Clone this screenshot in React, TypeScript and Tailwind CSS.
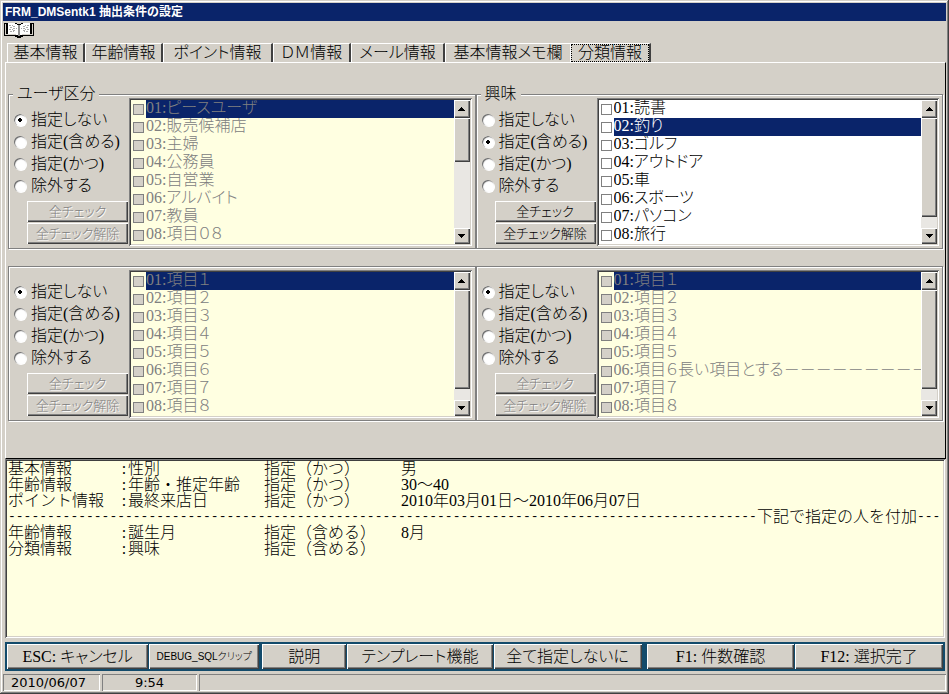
import React from 'react';
import { clsx } from 'clsx';

const raised =
  'bg-[#d4d0c8] shadow-[inset_1px_1px_#fff,inset_-1px_-1px_#404040,inset_-2px_-2px_#808080]';
const sunken =
  'shadow-[inset_1px_1px_#808080,inset_-1px_-1px_#fff,inset_2px_2px_#404040,inset_-2px_-2px_#d4d0c8]';
const mincho =
  "font-['Liberation_Serif','Noto_Sans_CJK_JP',serif] font-light [font-feature-settings:'palt']";

type Group = {
  id: string;
  title?: string;
  mode: number;
  enabled: boolean;
  selected: number;
  thumb: string;
  items: string[];
};

const modes = ['指定しない', '指定(含める)', '指定(かつ)', '除外する'];

const groups: Group[] = [
  {
    id: 'user',
    title: 'ユーザ区分',
    mode: 0,
    enabled: false,
    selected: 0,
    thumb: 'h-11',
    items: ['ピースユーザ', '販売候補店', '主婦', '公務員', '自営業', 'アルバイト', '教員', '項目０８'],
  },
  {
    id: 'hobby',
    title: '興味',
    mode: 1,
    enabled: true,
    selected: 1,
    thumb: 'h-[99px]',
    items: ['読書', '釣り', 'ゴルフ', 'アウトドア', '車', 'スポーツ', 'パソコン', '旅行'],
  },
  {
    id: 'third',
    mode: 0,
    enabled: false,
    selected: 0,
    thumb: 'h-[99px]',
    items: ['項目１', '項目２', '項目３', '項目４', '項目５', '項目６', '項目７', '項目８'],
  },
  {
    id: 'fourth',
    mode: 0,
    enabled: false,
    selected: 0,
    thumb: 'h-[99px]',
    items: ['項目１', '項目２', '項目３', '項目４', '項目５', '項目６長い項目とする－－－－－－－－－', '項目７', '項目８'],
  },
];

const tabs = [
  { label: '基本情報', width: 'w-[78px]' },
  { label: '年齢情報', width: 'w-[78px]' },
  { label: 'ポイント情報', width: 'w-[110px]' },
  { label: 'ＤＭ情報', width: 'w-[78px]' },
  { label: 'メール情報', width: 'w-[94px]' },
  { label: '基本情報メモ欄', width: 'w-[125px]' },
  { label: '分類情報', width: 'w-[81px]' },
];

const summaryTop = [
  ['基本情報', '性別', '指定（かつ）', '男'],
  ['年齢情報', '年齢・推定年齢', '指定（かつ）', '30～40'],
  ['ポイント情報', '最終来店日', '指定（かつ）', '2010年03月01日～2010年06月07日'],
];
const summaryBottom = [
  ['年齢情報', '誕生月', '指定（含める）', '8月'],
  ['分類情報', '興味', '指定（含める）', ''],
];

function BookIcon() {
  return (
    <svg width="30" height="16" viewBox="0 0 30 16" shapeRendering="crispEdges" aria-hidden="true">
      <path d="M0 1h13v1h4v-1h13v13h-11v1h-2v1h-4v-1h-2v-1h-11z" fill="#000" />
      <path d="M1 2h1v10h10v1h-11z M28 2h1v11h-11v-1h10z" fill="#d4d0c8" />
      <path d="M4 1h7v1h2v1h1v10h-2v-1h-8z M26 1h-7v1h-2v1h-1v10h2v-1h8z" fill="#fff" />
      <path
        d="M5 3.5h4M9 4.5h3M6 5.5h3M9 6.5h4M5 7.5h4M9 8.5h3M6 9.5h4M25 3.5h-4M21 4.5h-3M24 5.5h-3M21 6.5h-4M25 7.5h-4M21 8.5h-3M24 9.5h-4"
        fill="none"
        stroke="#a8a8a8"
        strokeDasharray="2 1"
      />
      <path d="M14 3h2v11h-2z" fill="#909090" />
    </svg>
  );
}

function ScrollBar({ thumb }: { thumb: string }) {
  return (
    <div className="flex w-4 shrink-0 flex-col bg-[#e9e7e3]">
      <button type="button" aria-label="上へスクロール" className={clsx('flex h-[18px] items-center justify-center', raised)}>
        <svg width="7" height="4" viewBox="0 0 7 4" shapeRendering="crispEdges">
          <path d="M3 0h1v1h1v1h1v1h1v1H0V3h1V2h1V1h1z" />
        </svg>
      </button>
      <div className={clsx(thumb, raised)} />
      <div className="flex-1" />
      <button type="button" aria-label="下へスクロール" className={clsx('flex h-4 items-center justify-center', raised)}>
        <svg width="7" height="4" viewBox="0 0 7 4" shapeRendering="crispEdges">
          <path d="M0 0h7v1H6v1H5v1H4v1H3V3H2V2H1V1H0z" />
        </svg>
      </button>
    </div>
  );
}

function GroupPanel({ group }: { group: Group }) {
  const { id, title, mode, enabled, selected, thumb, items } = group;
  return (
    <fieldset
      aria-label={title ?? '分類'}
      className="relative flex min-w-0 border border-[#808080] p-[3px] pb-0.5 shadow-[inset_1px_1px_#fff,1px_1px_#fff]"
    >
      {title && (
        <legend className="absolute -top-[11px] left-1 bg-[#d4d0c8] px-1 text-[16px] leading-5">{title}</legend>
      )}
      <div className="flex w-[117px] shrink-0 flex-col pt-[11px]">
        {modes.map((label, i) => (
          <label key={label} className="flex h-[22px] items-center gap-[5px] pl-0.5 text-[16px] whitespace-nowrap">
            <input
              type="radio"
              name={id}
              defaultChecked={i === mode}
              className="size-3 shrink-0 appearance-none rounded-full bg-white shadow-[inset_1px_1px_1px_#606060,1px_1px_#fff] checked:bg-[radial-gradient(circle,#000_0_2px,#fff_2px)]"
            />
            {label}
          </label>
        ))}
        <div className="mt-1 flex flex-col gap-px pr-px pl-[15px]">
          {['全チェック', '全チェック解除'].map((label) => (
            <button
              key={label}
              type="button"
              disabled={!enabled}
              className={clsx(
                'h-[21px] w-full text-[13px] leading-4 whitespace-nowrap',
                raised,
                !enabled && 'text-[#808080] [text-shadow:1px_1px_#fff]',
              )}
            >
              {label}
            </button>
          ))}
        </div>
      </div>
      <div className={clsx('flex min-w-0 flex-1 p-[2px]', sunken, enabled ? 'bg-white' : 'bg-[#ffffe1]')}>
        <div className="min-w-0 flex-1">
          {items.map((item, i) => (
            <label
              key={item}
              className={clsx('flex h-[18px] items-center gap-0.5 pl-0.5 text-[16px]', !enabled && 'text-[#808080]')}
            >
              <input
                type="checkbox"
                disabled={!enabled}
                className="size-[11px] shrink-0 appearance-none border border-[#808080] bg-white checked:bg-black disabled:bg-[#d4d0c8]"
              />
              <span
                className={clsx(
                  'h-[18px] min-w-0 flex-1 overflow-hidden leading-4 whitespace-nowrap',
                  i === selected && 'bg-[#0a246a]',
                  i === selected && enabled && 'text-white',
                )}
              >
                {`0${i + 1}:${item}`}
              </span>
            </label>
          ))}
        </div>
        <ScrollBar thumb={thumb} />
      </div>
    </fieldset>
  );
}

function SummaryRow({ cells }: { cells: string[] }) {
  return (
    <div className="grid h-4 grid-cols-[112px_144px_137px_1fr] whitespace-nowrap">
      <span>{cells[0]}</span>
      <span className="flex">
        <span className="w-2 text-center">:</span>
        {cells[1]}
      </span>
      <span>{cells[2]}</span>
      <span>{cells[3]}</span>
    </div>
  );
}

function ActionButton({ label, grow, small }: { label: string; grow: string; small?: boolean }) {
  return (
    <button
      type="button"
      className={clsx(
        'h-[25px] min-w-0 basis-0 overflow-hidden whitespace-nowrap',
        raised,
        grow,
        small ? "font-['Liberation_Sans','Noto_Sans_CJK_JP',sans-serif] text-[10px]" : 'text-[16px]',
      )}
    >
      {label}
    </button>
  );
}

export default function App() {
  return (
    <div
      className={clsx(
        'flex min-h-screen flex-col bg-[#d4d0c8] p-[3px] text-black shadow-[inset_-1px_-1px_#404040,inset_1px_1px_#d4d0c8,inset_-2px_-2px_#808080,inset_2px_2px_#fff]',
        mincho,
      )}
    >
      <header>
        <h1 className="h-[18px] bg-[#0a246a] px-0.5 font-['Liberation_Sans','Noto_Sans_CJK_JP',sans-serif] text-[12px] leading-[18px] font-bold text-white [font-feature-settings:normal]">
          FRM_DMSentk1 抽出条件の設定
        </h1>
        <button type="button" aria-label="ヘルプ" className="ml-px flex h-[18px] items-center">
          <BookIcon />
        </button>
      </header>

      <div role="tablist" className="mt-1 flex h-[19px] px-1">
        {tabs.map((tab, i) => {
          const active = i === tabs.length - 1;
          return (
            <button
              key={tab.label}
              type="button"
              role="tab"
              aria-selected={active}
              className={clsx(
                'flex items-center justify-center border-t border-l border-white text-[16px] leading-[18px] whitespace-nowrap',
                tab.width,
                i !== 5 && 'border-r-2 border-r-[#404040]',
              )}
            >
              {active ? <span className="h-[18px] w-full border border-dotted border-black leading-4">{tab.label}</span> : tab.label}
            </button>
          );
        })}
      </div>

      <section
        role="tabpanel"
        className="ml-0.5 grid grid-cols-2 gap-y-[17px] border-t border-r border-b border-l border-t-white border-r-black border-b-black border-l-white pt-[31px] pr-0.5 pb-[37px] pl-0.5"
      >
        {groups.map((g) => (
          <GroupPanel key={g.id} group={g} />
        ))}
      </section>

      <section
        aria-label="抽出条件"
        className={clsx(
          'mr-px ml-0.5 flex-1 overflow-hidden bg-[#ffffe1] px-[3px] pt-0.5 text-[16px] leading-4',
          '[font-feature-settings:normal]',
          sunken,
        )}
      >
        {summaryTop.map((r) => (
          <SummaryRow key={r[0]} cells={r} />
        ))}
        <div className="flex h-4 overflow-hidden whitespace-nowrap">
          <span className="font-['Liberation_Mono',monospace] text-[13px]">{'-'.repeat(96)}</span>
          <span>下記で指定の人を付加</span>
          <span className="font-['Liberation_Mono',monospace] text-[13px]">---</span>
        </div>
        {summaryBottom.map((r) => (
          <SummaryRow key={r[0]} cells={r} />
        ))}
      </section>

      <nav className="mr-px ml-0.5 mt-1 flex gap-[3px] bg-[#134b6b] p-0.5">
        <div className="flex grow-[252] basis-0 gap-px">
          <ActionButton label="ESC: キャンセル" grow="grow-[141]" />
          <ActionButton label="DEBUG_SQLクリップ" grow="grow-[110]" small />
        </div>
        <div className="flex grow-[379] basis-0 gap-px">
          <ActionButton label="説明" grow="grow-[84]" />
          <ActionButton label="テンプレート機能" grow="grow-[145]" />
          <ActionButton label="全て指定しないに" grow="grow-[148]" />
        </div>
        <div className="flex grow-[296] basis-0 gap-px border-l-2 border-[#134b6b]">
          <ActionButton label="F1: 件数確認" grow="grow-[147]" />
          <ActionButton label="F12: 選択完了" grow="grow-[147]" />
        </div>
      </nav>

      <footer className="mt-[3px] flex h-[17px] gap-0.5 font-['DejaVu_Sans',sans-serif] text-[13px] leading-[17px] font-normal">
        <div className="w-[97px] pl-2 shadow-[inset_1px_1px_#808080,inset_-1px_-1px_#fff]">2010/06/07</div>
        <div className="w-[95px] text-center shadow-[inset_1px_1px_#808080,inset_-1px_-1px_#fff]">9:54</div>
        <div className="flex-1 shadow-[inset_1px_1px_#808080,inset_-1px_-1px_#fff]" />
      </footer>
    </div>
  );
}
